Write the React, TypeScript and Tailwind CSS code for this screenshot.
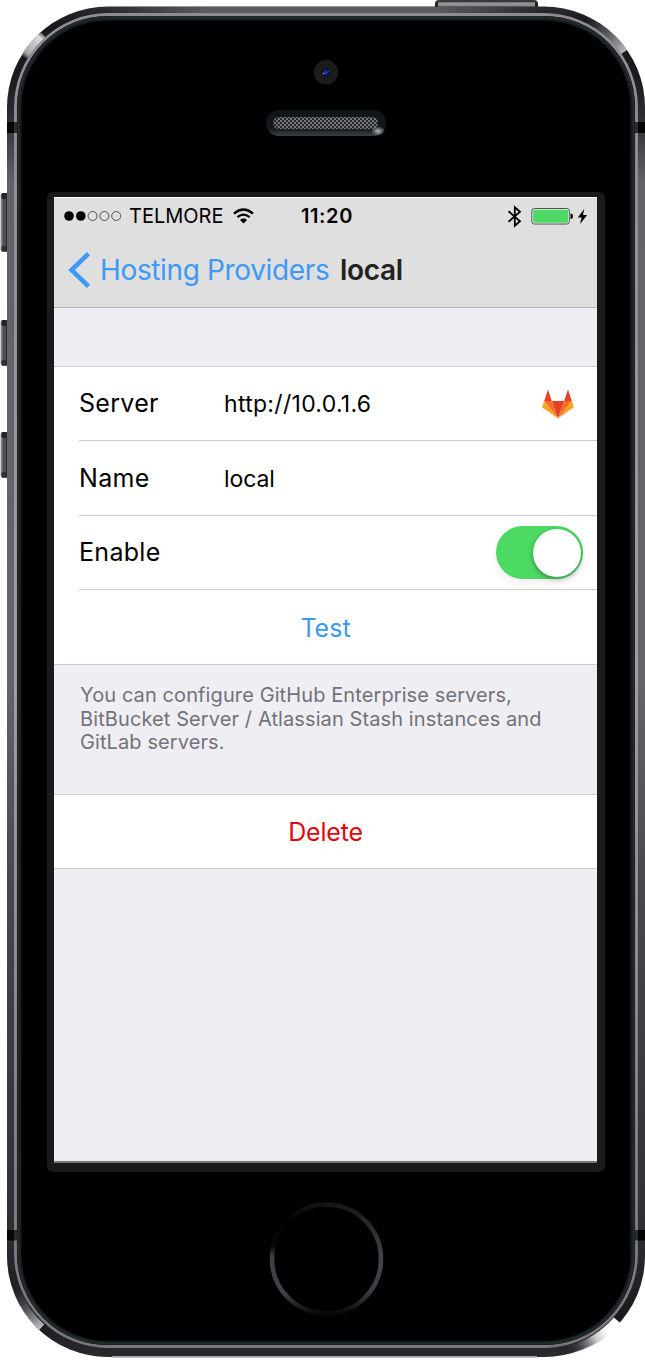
import type { ReactNode } from "react";

function PhoneFrame() {
  return (
    <svg className="absolute inset-0" width="645" height="1366" viewBox="0 0 645 1366" aria-hidden="true">
      <defs>
        <linearGradient id="rim" x1="0" y1="0" x2="0" y2="1">
          <stop offset="0" stopColor="#2c2b2f" />
          <stop offset="0.012" stopColor="#19181c" />
          <stop offset="0.05" stopColor="#1b1a20" />
          <stop offset="0.08" stopColor="#2c2b30" />
          <stop offset="0.13" stopColor="#646267" />
          <stop offset="0.5" stopColor="#666469" />
          <stop offset="0.65" stopColor="#48474c" />
          <stop offset="0.9" stopColor="#302f35" />
          <stop offset="0.97" stopColor="#19191e" />
          <stop offset="1" stopColor="#2b2a2f" />
        </linearGradient>
        <linearGradient id="topBand" x1="0" y1="0" x2="1" y2="0">
          <stop offset="0" stopColor="#5c5b60" stopOpacity="0" />
          <stop offset="0.25" stopColor="#5c5b60" />
          <stop offset="0.75" stopColor="#5c5b60" />
          <stop offset="1" stopColor="#5c5b60" stopOpacity="0" />
        </linearGradient>
        <linearGradient id="line" x1="0" y1="0" x2="0" y2="1">
          <stop offset="0" stopColor="#8e8c92" />
          <stop offset="0.5" stopColor="#a3a1a8" />
          <stop offset="1" stopColor="#77767b" />
        </linearGradient>
        <linearGradient id="glintTL" gradientUnits="userSpaceOnUse" x1="23" y1="58" x2="42" y2="33">
          <stop offset="0" stopColor="#a5a4a9" stopOpacity="0" />
          <stop offset="0.2" stopColor="#a5a4a9" />
          <stop offset="0.85" stopColor="#dddce0" />
          <stop offset="1" stopColor="#57565a" />
        </linearGradient>
        <linearGradient id="glintTR" gradientUnits="userSpaceOnUse" x1="586" y1="18" x2="626" y2="50">
          <stop offset="0" stopColor="#77767b" stopOpacity="0" />
          <stop offset="1" stopColor="#b9b8bd" />
        </linearGradient>
        <linearGradient id="glintBL" gradientUnits="userSpaceOnUse" x1="15" y1="1290" x2="40" y2="1328">
          <stop offset="0" stopColor="#68676b" stopOpacity="0" />
          <stop offset="1" stopColor="#bdbcc0" />
        </linearGradient>
        <linearGradient id="glintBR" gradientUnits="userSpaceOnUse" x1="570" y1="1349" x2="617" y2="1322">
          <stop offset="0" stopColor="#55545a" stopOpacity="0" />
          <stop offset="0.5" stopColor="#c8c7cc" />
          <stop offset="0.75" stopColor="#ffffff" />
        </linearGradient>
        <linearGradient id="button" x1="0" y1="0" x2="1" y2="0">
          <stop offset="0" stopColor="#a09fa3" />
          <stop offset="0.35" stopColor="#4b4a4f" />
          <stop offset="1" stopColor="#57565b" />
        </linearGradient>
        <linearGradient id="topButton" x1="0" y1="0" x2="0" y2="1">
          <stop offset="0" stopColor="#39383c" />
          <stop offset="0.25" stopColor="#39383c" />
          <stop offset="0.35" stopColor="#9b9a9e" />
          <stop offset="1" stopColor="#7b7a7e" />
        </linearGradient>
        <pattern id="mesh" width="4" height="4" patternUnits="userSpaceOnUse">
          <rect width="4" height="4" fill="#25272a" />
          <rect width="2" height="2" fill="#74767a" />
          <rect x="2" y="2" width="2" height="2" fill="#74767a" />
        </pattern>
        <linearGradient id="slot" x1="0" y1="0" x2="0" y2="1">
          <stop offset="0" stopColor="#0f1416" />
          <stop offset="0.7" stopColor="#14191b" />
          <stop offset="1" stopColor="#3c4042" />
        </linearGradient>
        <radialGradient id="slotGlint">
          <stop offset="0" stopColor="#b2b4b5" />
          <stop offset="1" stopColor="#b2b4b5" stopOpacity="0" />
        </radialGradient>
        <radialGradient id="lens">
          <stop offset="0" stopColor="#2b4dc4" />
          <stop offset="0.5" stopColor="#101c66" />
          <stop offset="1" stopColor="#080a1c" />
        </radialGradient>
        <linearGradient id="ringRight" x1="0" y1="0" x2="0" y2="1">
          <stop offset="0" stopColor="#17171a" />
          <stop offset="0.5" stopColor="#454448" />
          <stop offset="0.8" stopColor="#3d3c40" />
          <stop offset="1" stopColor="#08080a" />
        </linearGradient>
        <linearGradient id="ringLeft" x1="0" y1="0" x2="0" y2="1">
          <stop offset="0" stopColor="#131315" />
          <stop offset="0.15" stopColor="#020203" />
          <stop offset="0.38" stopColor="#09090a" />
          <stop offset="0.48" stopColor="#414044" />
          <stop offset="0.82" stopColor="#414044" />
          <stop offset="1" stopColor="#08080a" />
        </linearGradient>
      </defs>

      <path d="M435 8V4Q435 0 439 0H534Q538 0 538 4V8Z" fill="url(#topButton)" />
      <path d="M435 8V3L438 1V8ZM535 1L538 3V8H535Z" fill="#222126" />
      {[
        { y: 193, h: 59 },
        { y: 320, h: 46 },
        { y: 432, h: 46 },
      ].map(({ y, h }) => (
        <g key={y}>
          <rect x="0.5" y={y} width="9" height={h} rx="2.5" fill="url(#button)" />
          <rect x="1.5" y={y} width="6" height="6" rx="1.5" fill="#252429" />
          <rect x="1.5" y={y + h - 6} width="6" height="5" rx="1.5" fill="#302f33" />
          <rect x="6" y={y + 2} width="1.2" height={h - 4} fill="#28272b" />
        </g>
      ))}

      <rect x="7" y="6.5" width="638" height="1350.5" rx="101" fill="url(#rim)" />
      <rect x="100" y="7" width="445" height="6.5" fill="url(#topBand)" />
      <rect x="112" y="1356" width="425" height="1.8" fill="#a7a6aa" />
      <g fill="none" strokeWidth="7.6">
        <path d="M24.6 57A97.5 97.5 0 0 1 43.3 34.5" stroke="url(#glintTL)" />
        <path d="M586 19.5A97.5 97.5 0 0 1 624.1 52" stroke="url(#glintTR)" />
        <path d="M16.4 1289.2A97.5 97.5 0 0 0 41.6 1327.3" stroke="url(#glintBL)" />
        <path d="M569.2 1350.2A97.5 97.5 0 0 0 617.2 1320.4" stroke="url(#glintBR)" strokeWidth="8.6" />
      </g>
      <rect x="7" y="122" width="10" height="11" fill="#050506" />
      <rect x="635" y="122" width="10" height="11" fill="#050506" />
      <rect x="7" y="1230" width="10" height="10.5" fill="#050506" />
      <rect x="635" y="1230" width="10" height="10.5" fill="#050506" />
      <rect x="15.5" y="14.5" width="621" height="1332" rx="92.5" fill="none" stroke="url(#line)" strokeWidth="2.8" />
      <path d="M14 122h3v11h-3zM635 122h3v11h-3zM14 1230h3v10.5h-3zM635 1230h3v10.5h-3z" fill="#252d2f" />
      <rect x="17" y="16" width="618" height="1329" rx="91" fill="#171e20" />
      <rect x="18.5" y="17.5" width="615" height="1326" rx="89.5" fill="none" stroke="#252d2f" strokeWidth="1.6" />
      <rect x="21.5" y="20.5" width="609" height="1320.5" rx="86.5" fill="#000002" />

      <circle cx="326" cy="72.3" r="12.2" fill="#1d1b1b" />
      <circle cx="326" cy="72.5" r="4.4" fill="url(#lens)" />
      <circle cx="323.5" cy="73.5" r="0.8" fill="#8ca0ff" />
      <circle cx="329" cy="71" r="0.6" fill="#6f88f0" />
      <rect x="266" y="110" width="120" height="26" rx="13" fill="url(#slot)" />
      <ellipse cx="378" cy="131" rx="7" ry="5" fill="url(#slotGlint)" />
      <rect x="273" y="117" width="105" height="12" rx="6" fill="url(#mesh)" />

      <rect x="47" y="192" width="558" height="980" rx="6" fill="#1a1a1a" />
      <path d="M326.5 1204.5A54.5 54.5 0 0 1 326.5 1313.5" fill="none" stroke="url(#ringRight)" strokeWidth="4.6" />
      <path d="M326.5 1204.5A54.5 54.5 0 0 0 326.5 1313.5" fill="none" stroke="url(#ringLeft)" strokeWidth="4.6" />
    </svg>
  );
}

function StatusBar() {
  return (
    <div className="flex h-[36px] items-center pl-[10px] text-[20px] leading-none text-black">
      <svg width="58" height="12" viewBox="0 0 58 12">
        <circle cx="5" cy="6" r="4.8" />
        <circle cx="16.8" cy="6" r="4.8" />
        <g fill="none" stroke="#333" strokeWidth="0.8">
          <circle cx="28.6" cy="6" r="4.5" />
          <circle cx="40.4" cy="6" r="4.5" />
          <circle cx="52.2" cy="6" r="4.5" />
        </g>
      </svg>
      <span className="ml-[7px] w-[95px] whitespace-nowrap">TELMORE</span>
      <svg className="ml-[9px]" width="21" height="16" viewBox="0 0 21 16" fill="none" stroke="#000" strokeWidth="2.3">
        <path d="M1 5.6Q10.5 -2.5 20 5.6" />
        <path d="M4.4 9.2Q10.5 4 16.6 9.2" />
        <path d="M10.5 15.4L7 11.9Q10.5 9.2 14 11.9Z" fill="#000" stroke="none" />
      </svg>
      <span className="ml-[47px] w-[54px] font-semibold tracking-[0.6px] whitespace-nowrap">11:20</span>
      <svg className="ml-[152px]" width="16" height="23" viewBox="0 0 16 23" fill="none" stroke="#000" strokeWidth="1.8">
        <path d="M1.5 6.3L13 16.3L7.8 20.8V2.2L13 6.7L1.5 16.7" />
      </svg>
      <svg className="ml-[8px]" width="43" height="18" viewBox="0 0 43 18">
        <rect x="0.8" y="1.5" width="37.5" height="15.5" rx="2.5" fill="#f1f1f1" stroke="#4c514d" />
        <rect x="2.1" y="2.8" width="34.9" height="12.9" rx="1" fill="#4cd964" />
        <path d="M39.5 6.5Q42 6.5 42 9.2T39.5 12Z" />
      </svg>
      <svg className="ml-[3px]" width="11" height="17" viewBox="0 0 11 17">
        <path d="M7.2 1L0.8 9.5H4.6L3 16L10.2 7H6Z" />
      </svg>
    </div>
  );
}

function NavBar() {
  return (
    <div className="flex h-[72px] items-center pl-[13px] text-[28px] leading-none">
      <svg className="text-[#3d99f8]" width="24" height="36" viewBox="0 0 24 36" fill="none" stroke="currentColor" strokeWidth="4.6">
        <path d="M21.5 1.7L4.5 18L21.5 34.3" />
      </svg>
      <span className="ml-[9px] w-[240px] tracking-[-0.36px] whitespace-nowrap text-[#3d99f8]">Hosting Providers</span>
      <span className="font-semibold tracking-[-0.3px] whitespace-nowrap text-[#222]">local</span>
    </div>
  );
}

function GitLabLogo() {
  return (
    <svg width="32" height="30" viewBox="0 0 32 30">
      <path d="M6 0.5L2.2 12H9.8ZM26 0.5L22.2 12H29.8ZM9.8 12H22.2L16 29.5Z" fill="#e24329" />
      <path d="M2.2 12H9.8L16 29.5ZM29.8 12H22.2L16 29.5Z" fill="#fc6d26" />
      <path d="M2.2 12L0.2 17.5Q0 18.2 0.6 18.6L16 29.5ZM29.8 12L31.8 17.5Q32 18.2 31.4 18.6L16 29.5Z" fill="#fca326" />
    </svg>
  );
}

function Row({ label, children, compact }: { label: string; children?: ReactNode; compact?: boolean }) {
  return (
    <div className="pl-[25px]">
      <div className={compact ? "flex h-[74px] items-center border-b border-[#cccccf]" : "flex h-[75px] items-center border-b border-[#cccccf]"}>
        <span className="w-[145px] text-[25px] leading-none tracking-[0.3px] text-black">{label}</span>
        {children}
      </div>
    </div>
  );
}

export default function App() {
  return (
    <div className="relative h-[1366px] w-[645px] overflow-hidden bg-white pt-[197px] pl-[54px] font-['Inter',sans-serif]">
      <PhoneFrame />
      <main className="relative flex h-[966px] w-[543px] flex-col border-b-2 border-[#777779] bg-[#efeef5]">
        <header className="h-[111px] border-t border-b border-t-white border-b-[#b2b2b5] bg-[#dfdfdf]">
          <StatusBar />
          <NavBar />
        </header>
        <section className="mt-[58px] border-t border-[#cccccf] bg-white">
          <Row label="Server" compact>
            <span className="pt-[2px] text-[23px] leading-none tracking-[0.3px]">http://10.0.1.6</span>
            <div className="mr-[23px] ml-auto"><GitLabLogo /></div>
          </Row>
          <Row label="Name">
            <span className="pt-[2px] text-[23px] leading-none tracking-[-0.1px]">local</span>
          </Row>
          <Row label="Enable" compact>
            <div className="mr-[14px] ml-auto flex h-[53px] w-[87px] items-center justify-end rounded-full bg-[#4cd964] pr-[2px] shadow-[0_5px_10px_rgba(0,0,0,0.06)]">
              <div className="size-[48px] rounded-full bg-white shadow-[0_2px_5px_rgba(0,0,0,0.35)]" />
            </div>
          </Row>
          <div className="flex h-[75px] items-center justify-center border-b border-[#cccccf] pt-[2px] text-[25px] leading-none text-[#3d99f0]">Test</div>
        </section>
        <p className="h-[129px] pt-[19px] pl-[26px] text-[20px] leading-[23.7px] tracking-[0.1px] whitespace-nowrap text-[#737278]">
          You can configure GitHub Enterprise servers,<br />
          BitBucket Server / Atlassian Stash instances and<br />
          GitLab servers.
        </p>
        <div className="flex h-[75px] items-center justify-center border-y border-[#cccccf] bg-white pt-[2px] text-[25px] leading-none tracking-[-0.2px] text-[#df0710]">Delete</div>
      </main>
    </div>
  );
}
